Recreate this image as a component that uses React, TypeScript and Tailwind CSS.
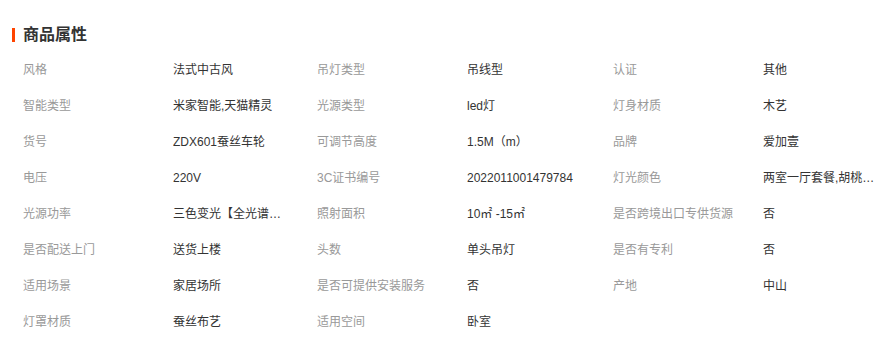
const rows: [string, string][] = [
  ['风格', '法式中古风'],
  ['吊灯类型', '吊线型'],
  ['认证', '其他'],
  ['智能类型', '米家智能,天猫精灵'],
  ['光源类型', 'led灯'],
  ['灯身材质', '木艺'],
  ['货号', 'ZDX601蚕丝车轮'],
  ['可调节高度', '1.5M（m）'],
  ['品牌', '爱加壹'],
  ['电压', '220V'],
  ['3C证书编号', '2022011001479784'],
  ['灯光颜色', '两室一厅套餐,胡桃木色,主卧,次卧'],
  ['光源功率', '三色变光【全光谱护眼】'],
  ['照射面积', '10㎡ -15㎡'],
  ['是否跨境出口专供货源', '否'],
  ['是否配送上门', '送货上楼'],
  ['头数', '单头吊灯'],
  ['是否有专利', '否'],
  ['适用场景', '家居场所'],
  ['是否可提供安装服务', '否'],
  ['产地', '中山'],
  ['灯罩材质', '蚕丝布艺'],
  ['适用空间', '卧室'],
];

export default function App() {
  return (
    <div
      className="w-[883px] h-[346px] bg-white overflow-hidden"
      style={{ fontFamily: '"Liberation Sans", "Noto Sans CJK SC", sans-serif' }}
    >
      <div className="flex items-center h-[16px] mt-[27px] pl-[12px]">
        <span className="w-[3px] h-[14px] bg-[#ff4400]" />
        <h3 className="ml-[8px] text-[16px] font-bold text-[#333] leading-none">商品属性</h3>
      </div>
      <div className="grid grid-cols-[294px_296px_270px] pl-[23px] mt-[9px]">
        {rows.map(([label, value], i) => (
          <div key={i} className="flex items-center h-[36px] text-[12px]">
            <span className="w-[150px] shrink-0 text-[#999] whitespace-nowrap">{label}</span>
            <span className="w-[120px] truncate text-[#333]">{value}</span>
          </div>
        ))}
      </div>
    </div>
  );
}
